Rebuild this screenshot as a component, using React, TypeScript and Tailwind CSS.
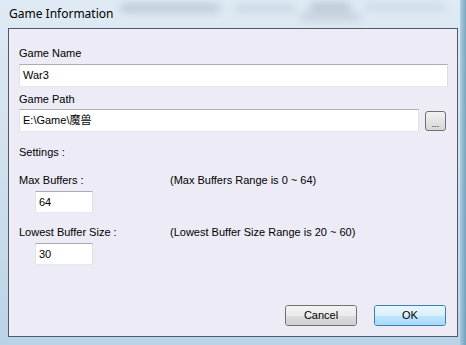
import React from 'react';

const ui = { fontFamily: '"Liberation Sans", "Noto Sans CJK SC", Arial, sans-serif' };

function TextBox({ value, className }: { value: string; className: string }) {
  return (
    <div
      className={`flex items-center bg-white border border-[#abadb3] border-r-[#dbdfe6] border-b-[#e3e9ef] border-l-[#e2e3ea] px-[3px] text-[11px] text-black ${className}`}
    >
      {value}
    </div>
  );
}

function Button({ label, focused }: { label: string; focused?: boolean }) {
  return (
    <div
      className={`relative flex items-center justify-center w-[72px] h-[21px] rounded-[3px] border text-[11px] text-black overflow-hidden ${
        focused ? 'border-[#3c7fb1] shadow-[inset_0_0_0_1px_#9fe6fb]' : 'border-[#707070] shadow-[inset_0_0_0_1px_#fbfbfb]'
      }`}
    >
      <div className="absolute inset-0 flex flex-col">
        <div className={`flex-1 ${focused ? 'bg-gradient-to-b from-[#eaf6fd] to-[#d9f0fc]' : 'bg-gradient-to-b from-[#f2f2f2] to-[#ebebeb]'}`} />
        <div className={`flex-1 ${focused ? 'bg-gradient-to-b from-[#bee6fd] to-[#a7d9f5]' : 'bg-gradient-to-b from-[#dddddd] to-[#cfcfcf]'}`} />
      </div>
      <span className="relative">{label}</span>
    </div>
  );
}

export default function App() {
  return (
    <div className="relative w-[466px] h-[345px] overflow-hidden flex flex-col bg-gradient-to-b from-[#dfeaf4] via-[#cfe0ee] to-[#b9d3e6]" style={ui}>
      {/* blurred glass backdrop */}
      <div className="absolute left-[120px] top-[4px] w-[100px] h-[8px] bg-[#6b7f92] opacity-30 blur-[4px]" />
      <div className="absolute left-[235px] top-[6px] w-[60px] h-[5px] bg-[#7a8c9c] opacity-30 blur-[4px]" />
      <div className="absolute left-[310px] top-[3px] w-[40px] h-[8px] bg-[#5b6f82] opacity-30 blur-[4px]" />
      <div className="absolute left-[365px] top-[4px] w-[80px] h-[6px] bg-[#8aa0b3] opacity-25 blur-[4px]" />
      <div className="absolute left-[300px] top-[14px] w-[60px] h-[6px] bg-[#5f7387] opacity-25 blur-[4px]" />
      <div className="absolute right-0 top-0 w-[6px] h-full bg-gradient-to-r from-[#9ec4dc] to-[#4f88a8] opacity-70" />

      {/* title bar */}
      <div className="relative h-[28px] pl-[9px] flex items-center text-[12px] text-black" style={{ fontFamily: '"Noto Sans", sans-serif' }}>
        Game Information
      </div>

      {/* client area */}
      <div className="relative mx-[8px] mb-[8px] flex-1 border border-[#4d5b68] bg-[#ecebf6] flex flex-col pl-[10px] pr-[9px] text-[11px] text-black">
        <div className="mt-[18px] h-[13px] leading-[13px]">Game Name</div>
        <TextBox value="War3" className="mt-[4px] h-[23px] w-full" />

        <div className="mt-[6px] h-[13px] leading-[13px]">Game Path</div>
        <div className="mt-[3px] flex items-center">
          <TextBox value="E:\Game\魔兽" className="h-[23px] w-[400px]" />
          <div className="ml-[6px] w-[21px] h-[20px] rounded-[3px] border border-[#707070] bg-gradient-to-b from-[#f2f2f2] to-[#d6d6d6] flex items-end justify-center text-[9px] leading-[12px]">
            ...
          </div>
        </div>

        <div className="mt-[14px] h-[13px] leading-[13px]">Settings :</div>

        <div className="mt-[15px] h-[13px] leading-[13px] flex">
          <span className="w-[151px]">Max Buffers :</span>
          <span>(Max Buffers Range is 0 ~ 64)</span>
        </div>
        <TextBox value="64" className="mt-[4px] ml-[16px] h-[22px] w-[58px]" />

        <div className="mt-[13px] h-[13px] leading-[13px] flex">
          <span className="w-[151px]">Lowest Buffer Size :</span>
          <span>(Lowest Buffer Size Range is 20 ~ 60)</span>
        </div>
        <TextBox value="30" className="mt-[4px] ml-[16px] h-[22px] w-[58px]" />

        <div className="mt-[40px] flex justify-end gap-[17px] pr-[2px]">
          <Button label="Cancel" />
          <Button label="OK" focused />
        </div>
      </div>
    </div>
  );
}
